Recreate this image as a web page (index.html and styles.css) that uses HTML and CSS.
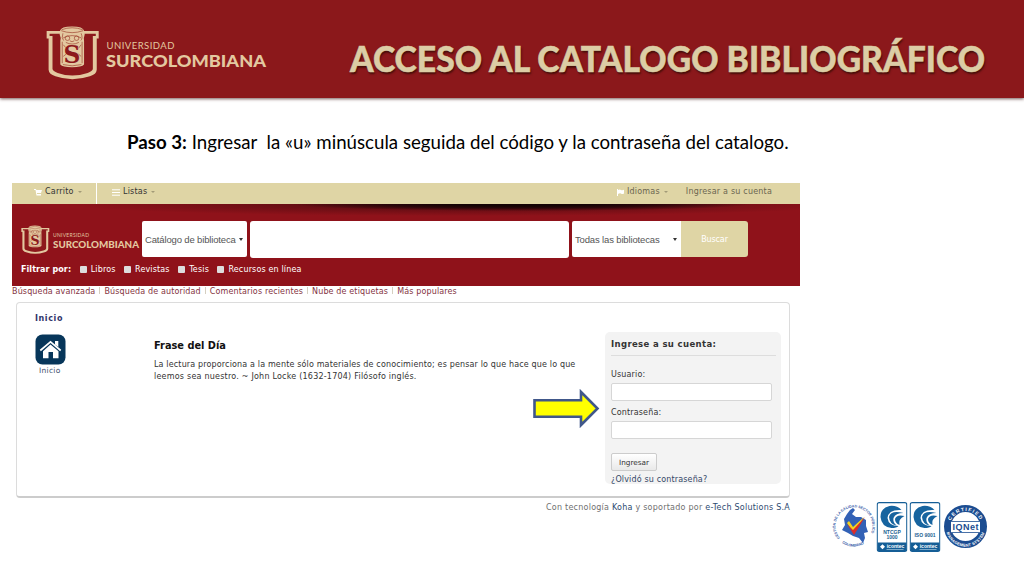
FILE: index.html
```
<!DOCTYPE html>
<html lang="es">
<head>
  <meta charset="utf-8">
  <title>Acceso al catalogo bibliográfico</title>
  <link rel="stylesheet" href="styles.css">
</head>
<body>

  <svg class="defs" width="0" height="0">
    <symbol id="escudo" viewBox="18 14 166 166">
      <path fill="#e3c8a0" d="M20 31H180V54H174V150Q173 164 153 170Q98 188 47 170Q27 164 26 150V54H20Z"/>
      <path fill="#8d191c" d="M29 39H171V46H162V148Q161 155 146 160Q98 176 54 160Q39 155 38 148V46H29Z"/>
      <path fill="#e3c8a0" d="M61 30Q64 17 98 17Q132 17 135 30L137 42Q133 52 135 62V134Q128 142 98 142Q69 142 62 134V62Q65 52 60 42Z"/>
      <g fill="none" stroke="#9b3d2c" stroke-width="2">
        <path d="M65 30Q98 42 132 30M66 27Q98 15 131 27M70 38Q65 54 72 60M126 38Q132 54 125 60M71 52Q98 38 126 52"/>
        <circle cx="84" cy="53" r="7"/>
        <circle cx="112" cy="53" r="7"/>
        <path d="M91 61Q98 67 105 61M79 66Q98 76 119 66M68 64V130M129 64V130M70 134Q98 142 127 134M71 73L79 82M126 73L118 84M71 109L80 102M126 109L118 102"/>
      </g>
      <text x="98" y="130" text-anchor="middle" class="escudo-s">S</text>
    </symbol>
  </svg>

  <header class="banner">
    <div class="logo">
      <svg class="logo-icon"><use href="#escudo"/></svg>
      <svg class="logo-text" viewBox="0 0 162 34">
        <text x="0.5" y="10" font-size="9.5" textLength="68">UNIVERSIDAD</text>
        <text x="0" y="28" font-size="17" font-weight="900" textLength="160" lengthAdjust="spacingAndGlyphs">SURCOLOMBIANA</text>
      </svg>
    </div>
    <h1><span>ACCESO AL CATALOGO BIBLIOGRÁFICO</span></h1>
  </header>

  <p class="paso"><span><b>Paso 3:</b> Ingresar&nbsp; la «u» minúscula seguida del código y la contraseña del catalogo.</span></p>

  <main class="koha">
    <nav class="topbar">
      <div class="item carrito">
        <svg width="8" height="8" viewBox="0 0 8 8"><path fill="#fff" d="M0 1H2L2.3 2H8L7 5H3V6H7V7.5H2.5L1.5 2H0Z"/></svg>
        <span>Carrito</span><i class="caret"></i>
      </div>
      <div class="item listas">
        <svg width="8" height="7" viewBox="0 0 8 7"><path stroke="#fff" d="M0 .8H8M0 3.5H8M0 6.2H8"/></svg>
        <span>Listas</span><i class="caret"></i>
      </div>
      <div class="item idiomas">
        <svg width="7" height="7" viewBox="0 0 7 7"><path fill="#fff" d="M0 0H1V1Q3 0 4 1Q5.500 1.500 7 .8V4.500Q5 5.500 4 4.500Q2.500 4 1 5V7H0Z"/></svg>
        <span>Idiomas</span><i class="caret"></i>
      </div>
      <div class="item cuenta"><span>Ingresar a su cuenta</span></div>
    </nav>

    <section class="buscador">
      <div class="fila">
        <div class="logo mini">
          <svg class="logo-icon"><use href="#escudo"/></svg>
          <svg class="logo-text" viewBox="0 0 87 20">
            <text x="0" y="5.200" font-size="5" textLength="36">UNIVERSIDAD</text>
            <text x="0" y="16" font-size="10" font-weight="900" textLength="86" lengthAdjust="spacingAndGlyphs">SURCOLOMBIANA</text>
          </svg>
        </div>
        <div class="select catalogo"><span>Catálogo de biblioteca</span><i></i></div>
        <div class="consulta"></div>
        <div class="select bibliotecas"><span>Todas las bibliotecas</span><i></i></div>
        <div class="buscar">Buscar</div>
      </div>
      <div class="filtros">
        <b>Filtrar por:</b>
        <label><i></i><span>Libros</span></label>
        <label><i></i><span>Revistas</span></label>
        <label><i></i><span>Tesis</span></label>
        <label><i></i><span>Recursos en línea</span></label>
      </div>
    </section>

    <div class="enlaces">
      <a>Búsqueda avanzada</a><a>Búsqueda de autoridad</a><a>Comentarios recientes</a><a>Nube de etiquetas</a><a>Más populares</a>
    </div>

    <section class="panel">
      <div class="inicio">
        <b>Inicio</b>
        <svg width="31" height="31" viewBox="0 0 31 31">
          <rect x=".5" y=".5" width="30" height="30" rx="7" fill="#07365a"/>
          <path fill="#fff" d="M15.500 10.500L23.500 17.200V24.200H18V18H13.500V24.200H8V17.200Z"/>
          <path fill="none" stroke="#fff" stroke-width="1.700" d="M5.300 16.500L15.500 7.800L25.700 16.500"/>
          <path fill="#fff" d="M20 7H23.300V13L20 10.500Z"/>
        </svg>
        <span>Inicio</span>
      </div>

      <div class="frase">
        <h2>Frase del Día</h2>
        <p>La lectura proporciona a la mente sólo materiales de conocimiento; es pensar lo que hace que lo que<br><span>leemos sea nuestro. ~ John Locke (1632-1704) Filósofo inglés.</span></p>
      </div>

      <div class="acceso">
        <h3>Ingrese a su cuenta:</h3>
        <label>Usuario:</label>
        <div class="campo"></div>
        <label>Contraseña:</label>
        <div class="campo"></div>
        <div class="boton">Ingresar</div>
        <a>¿Olvidó su contraseña?</a>
      </div>

      <svg class="flecha" width="68" height="42" viewBox="0 0 68 42">
        <path fill="#ff0" stroke="#40578a" stroke-width="2.600" d="M2.500 12.300H49V4L65.500 20.500L49 37V28.700H2.500Z"/>
      </svg>
    </section>

    <p class="pie">Con tecnología <a>Koha</a> y soportado por <a>e-Tech Solutions S.A</a></p>
  </main>

  <footer class="sellos">
    <svg width="156" height="54" viewBox="0 0 156 54">
      <defs>
        <path id="arco1" d="M8 38A18.500 18.500 0 1 1 36 38"/>
        <path id="abajo1" d="M10 43A20.500 20.500 0 0 0 33 43"/>
        <path id="arco2" d="M117.500 27A16 16 0 0 1 149.500 27"/>
        <path id="abajo2" d="M113.800 27A19.700 19.700 0 0 0 153.200 27"/>
        <symbol id="icontec" viewBox="0 0 31 50">
          <rect x=".7" y=".7" width="29.600" height="48.600" rx="2" fill="#fff" stroke="#155e96" stroke-width="1.200"/>
          <path fill="#155e96" d="M1 40.500H30V48Q30 49 29 49H2Q1 49 1 48Z"/>
          <path fill="#17649f" d="M25 8Q20 3 13 4Q4 6 4 15Q5 25 15 26Q20 26 22 24Q12 24 11 16Q12 7 25 8Z"/>
          <path fill="#17649f" d="M27 11Q14 8 12.500 15Q13 22 20 23.500Q16 20 17 16Q19 11 27 11Z"/>
          <path fill="#17649f" d="M28 14Q20 12 18.500 17Q18.500 21 23 23Q21.500 17 28 14Z"/>
          <path fill="#fff" d="M6 42.300L8.500 44.800L6 47.300L3.500 44.800Z"/>
          <text x="19" y="45.800" class="ico">icontec</text>
          <path stroke="#a9cbe0" stroke-width=".7" d="M10 47.500H27"/>
        </symbol>
      </defs>

      <g fill="#375ba7" class="anillo1">
        <text><textPath href="#arco1" textLength="78">GESTIÓN DE LA CALIDAD SECTOR PÚBLICO</textPath></text>
        <text><textPath href="#abajo1" textLength="23">COLOMBIANO</textPath></text>
      </g>
      <path fill="#3261b6" d="M21 8L23 10L20 14L24 17L29 17L34 20V26L36 32L32 33L33 38L31 43L27 38L21 36L16 33L10 30L13 25L12 19L15 14L18 10Z"/>
      <path fill="#f4d21f" d="M15 23L17 21L21 27L32 17L22 33Z"/>
      <path fill="#d92d2b" d="M15 24L21 30L33 17L22 35Z"/>

      <use href="#icontec" x="44.500" y="2" width="31" height="50"/>
      <text x="60" y="33.500" class="norma">NTCGP</text>
      <text x="60" y="38.800" class="norma">1000</text>
      <use href="#icontec" x="77.500" y="2" width="31" height="50"/>
      <text x="93" y="37" class="norma">ISO 9001</text>

      <circle cx="133.500" cy="26.500" r="18" fill="#fff" stroke="#1c4d91" stroke-width="7"/>
      <g class="anillo2">
        <text><textPath href="#arco2" startOffset="50%" text-anchor="middle">CERTIFIED</textPath></text>
        <text class="chico"><textPath href="#abajo2" startOffset="50%" text-anchor="middle">MANAGEMENT SYSTEM</textPath></text>
      </g>
      <rect x="119" y="21" width="29" height="12" fill="#fff"/>
      <path stroke="#1c4d91" stroke-width=".8" d="M119 21.500H148M119 32.500H148"/>
      <text x="133.500" y="30.300" class="iqnet" textLength="26">IQNet</text>
    </svg>
  </footer>

</body>
</html>
```
FILE: styles.css
```
* {
  box-sizing: border-box;
}

body {
  margin: 0;
  width: 1024px;
  height: 576px;
  overflow: hidden;
  background: #fff;
  color: #333;
  font-family: "DejaVu Sans", sans-serif;
  font-size: 8px;
}

h1, h2, h3, p {
  margin: 0;
}

i {
  display: block;
}

svg {
  display: block;
  overflow: visible;
}

.defs {
  position: absolute;
}

.escudo-s {
  font: bold 72px "DejaVu Serif", serif;
  fill: #8d191c;
}

/* encabezado */
.banner {
  display: flex;
  justify-content: space-between;
  height: 98px;
  padding: 25px 39px 0 46px;
  background: #8b181b;
  box-shadow: 0 1px 3px rgba(60, 20, 20, 0.7);
}

.logo {
  display: flex;
}

.logo-icon {
  width: 54px;
  height: 55px;
}

.logo-text {
  width: 162px;
  height: 34px;
  margin: 14px 0 0 6px;
  font-family: Lato, sans-serif;
  fill: #e3c8a0;
}

.banner h1 {
  width: 635px;
  padding-top: 9px;
  font: 900 36px/48px Lato, sans-serif;
  white-space: nowrap;
  color: #dccda5;
  text-shadow: 1px 2px 2px rgba(40, 10, 0, 0.7);
  -webkit-text-stroke: 0.5px #dccda5;
}

.banner h1 span {
  display: inline-block;
  transform: scaleX(0.937);
  transform-origin: 0 0;
}

.paso {
  height: 85px;
  padding: 31px 0 0 127px;
  font: 18.5px/26px Lato, sans-serif;
  color: #000;
  white-space: nowrap;
}

.paso span {
  display: inline-block;
  transform: scaleX(1.01);
  transform-origin: 0 0;
}

/* catalogo */
.koha {
  width: 788px;
  margin-left: 12px;
}

.topbar {
  display: flex;
  height: 21px;
  background: #dfd5a5;
  line-height: 18px;
}

.item {
  display: flex;
  align-items: center;
  height: 18px;
}

.item span {
  margin-left: 3px;
  letter-spacing: 0.2px;
  white-space: nowrap;
}

.carrito {
  width: 85px;
  height: 21px;
  padding: 0 0 3px 22px;
  border-right: 1px solid #fff;
}

.listas {
  padding-left: 15px;
}

.idiomas {
  margin-left: auto;
  color: #6b6550;
}

.cuenta {
  margin: 0 28px 0 15px;
  color: #6b6550;
}

.caret {
  margin-left: 4px;
  border: 2.5px solid transparent;
  border-top-color: #a39b78;
  border-bottom: 0;
}

.buscador {
  height: 82px;
  padding: 17px 0 0 9px;
  background:
    radial-gradient(ellipse 230px 7px at 510px 0, #140305 30%, rgba(30, 4, 8, 0.8) 60%, transparent) no-repeat,
    radial-gradient(ellipse 400px 12px at 450px 0, rgba(50, 8, 12, 0.75), transparent) no-repeat,
    #8f121a;
}

.fila {
  display: flex;
}

.mini .logo-icon {
  width: 29px;
  height: 31px;
  margin-top: 3px;
}

.mini .logo-text {
  width: 87px;
  height: 20px;
  margin: 11px 0 0 3px;
}

.mini {
  width: 121px;
}

.select {
  display: flex;
  align-items: center;
  justify-content: space-between;
  height: 36px;
  padding: 0 4px 0 3px;
  border-radius: 2px;
  background: #fff;
  font: 9.5px "Liberation Sans", sans-serif;
  color: #555;
  white-space: nowrap;
}

.select span {
  letter-spacing: -0.15px;
}

.select i {
  border: 2px solid transparent;
  border-top: 3px solid #333;
  border-bottom: 0;
}

.catalogo {
  width: 105px;
}

.consulta {
  width: 319px;
  height: 37px;
  margin: 0 3px;
  border-radius: 3px;
  background: #fff;
}

.bibliotecas {
  width: 109px;
  border-radius: 2px 0 0 2px;
}

.buscar {
  width: 67px;
  height: 36px;
  border-radius: 0 3px 3px 0;
  background: #dfd5a5;
  color: #fff;
  font-size: 8px;
  line-height: 37px;
  letter-spacing: -0.1px;
  text-align: center;
}

.filtros {
  display: flex;
  align-items: center;
  height: 14px;
  margin-top: 4px;
  color: #fff;
  letter-spacing: 0.15px;
  white-space: nowrap;
}

.filtros b {
  letter-spacing: 0.08px;
}

.filtros label {
  display: flex;
  align-items: center;
  margin-left: 8.5px;
}

.filtros i {
  width: 7px;
  height: 7px;
  margin-right: 4px;
  border-radius: 1px;
  background: #ddd;
}

.enlaces {
  display: flex;
  height: 16px;
  line-height: 12px;
  letter-spacing: 0.14px;
  color: #843341;
  white-space: nowrap;
}

.enlaces a + a {
  margin-left: 4px;
}

.enlaces a + a::before {
  content: "";
  display: inline-block;
  width: 1px;
  height: 7px;
  margin-right: 4px;
  background: #d5cfc0;
}

.panel {
  position: relative;
  display: flex;
  width: 774px;
  height: 196px;
  margin-left: 4px;
  border: 1px solid #dcdcdc;
  border-bottom: 2px solid #ccc;
  border-radius: 4px;
}

.inicio {
  display: flex;
  flex-direction: column;
  width: 137px;
  padding: 10px 0 0 18px;
  color: #40506c;
}

.inicio b {
  height: 21px;
  line-height: 11px;
  letter-spacing: 0.6px;
  color: #31366b;
}

.inicio span {
  margin: 1px 0 0 4px;
  font-size: 7.5px;
  letter-spacing: 0.3px;
}

.frase {
  width: 451px;
  padding-top: 37px;
  white-space: nowrap;
}

.frase h2 {
  font-size: 9.8px;
  line-height: 12px;
  color: #111;
}

.frase p {
  margin-top: 7px;
  line-height: 12px;
  letter-spacing: 0.15px;
}

.frase p span {
  letter-spacing: 0.22px;
}

.acceso {
  width: 176px;
  height: 152px;
  margin-top: 29px;
  padding: 0 5px 0 6px;
  border-radius: 5px;
  background: #f3f3f3;
  letter-spacing: 0.15px;
}

.acceso h3 {
  height: 24px;
  margin-bottom: 12px;
  border-bottom: 1px solid #ddd;
  font-size: 8.5px;
  line-height: 24px;
  letter-spacing: 0.37px;
}

.acceso label {
  display: block;
  line-height: 13px;
}

.campo {
  width: 161px;
  height: 18px;
  margin: 2px 0 5px;
  border: 1px solid #d6d6d6;
  border-radius: 2px;
  background: #fff;
}

.boton {
  width: 46px;
  height: 18px;
  margin: 14px 0 3px;
  border: 1px solid #ccc;
  border-radius: 2px;
  background: linear-gradient(#fff, #e9e9e9);
  font-size: 7.3px;
  line-height: 17px;
  letter-spacing: 0;
  text-align: center;
}

.acceso a {
  display: block;
  line-height: 11px;
  color: #344767;
}

.flecha {
  position: absolute;
  left: 515px;
  top: 85px;
}

.pie {
  width: 778px;
  margin-top: 4px;
  line-height: 12px;
  letter-spacing: 0.24px;
  text-align: right;
  color: #707070;
}

.pie a {
  color: #2d4a70;
}

/* sellos de calidad */
.sellos {
  margin: -14px 0 0 832px;
}

.sellos text {
  font-family: "Liberation Sans", sans-serif;
  font-weight: bold;
}

.sellos .anillo1 text {
  font-size: 3.6px;
}

.sellos .anillo2 text {
  font-size: 5px;
  letter-spacing: 1.2px;
  fill: #fff;
}

.sellos .anillo2 .chico {
  font-size: 4px;
  letter-spacing: 0.2px;
}

.sellos .norma {
  font-size: 5px;
  text-anchor: middle;
  fill: #245f91;
}

.sellos .ico {
  font-size: 5px;
  text-anchor: middle;
  fill: #fff;
}

.sellos .iqnet {
  font-size: 9px;
  text-anchor: middle;
  fill: #1c4d91;
}
```
